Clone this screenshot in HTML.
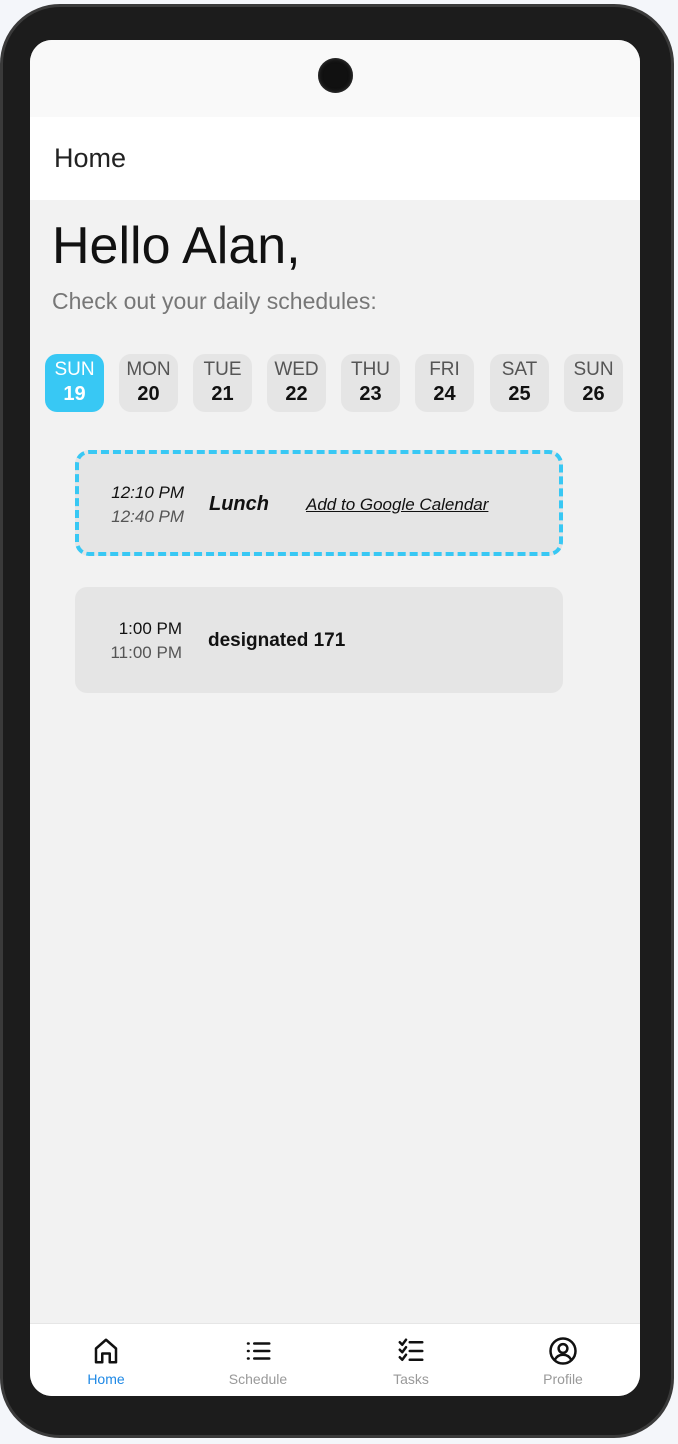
<!DOCTYPE html>
<html><head><meta charset="utf-8"><style>
*{margin:0;padding:0;box-sizing:border-box}
body{width:678px;height:1444px;background:#f4f6fa;position:relative;overflow:hidden;font-family:"Liberation Sans",Roboto,sans-serif}
.phone{position:absolute;left:0;top:4px;width:674px;height:1434px;background:#1c1c1c;border-radius:60px;border:3px solid #3a3a3a}
.screen{position:absolute;left:30px;top:40px;width:610px;height:1356px;background:#f2f2f2;border-radius:22px;overflow:hidden}
.status{height:77px;background:#f9f9f9;position:relative}
.cam{position:absolute;left:288px;top:18px;width:35px;height:35px;border-radius:50%;background:#111;box-shadow:inset 0 0 4px #444}
.header{height:83px;background:#fff;padding-left:24px;font-size:27px;line-height:83px;color:#222}
h1{font-weight:normal;font-size:52px;color:#111;position:absolute;left:22px;top:176px}
.sub{position:absolute;left:22px;top:248px;font-size:23px;color:#777}
.day{position:absolute;top:314px;width:59px;height:58px;border-radius:12px;background:#e5e5e5;text-align:center}
.day .n{font-size:19px;color:#555;margin-top:5px;line-height:22px}
.day .d{font-size:20px;font-weight:bold;color:#111;line-height:26px}
.day.sel{background:#38c8f4}.day.sel .n,.day.sel .d{color:#fff}
.card{position:absolute;background:#e5e5e5;border-radius:12px}
.nav{position:absolute;left:0;top:1283px;width:610px;height:73px;background:#fff;border-top:1px solid #e6e6e6}
.item{position:absolute;top:0;width:152px;text-align:center}
.item svg{display:block;margin:12px auto 0}
.item div{font-size:14px;color:#999;margin-top:5px}
</style></head><body>
<div class="phone"></div>
<div class="screen">
<div class="status"><div class="cam"></div></div>
<div class="header">Home</div>
<h1>Hello Alan,</h1>
<div class="sub">Check out your daily schedules:</div>
<div class="day sel" style="left:15px"><div class="n">SUN</div><div class="d">19</div></div>
<div class="day" style="left:89px"><div class="n">MON</div><div class="d">20</div></div>
<div class="day" style="left:163px"><div class="n">TUE</div><div class="d">21</div></div>
<div class="day" style="left:237px"><div class="n">WED</div><div class="d">22</div></div>
<div class="day" style="left:311px"><div class="n">THU</div><div class="d">23</div></div>
<div class="day" style="left:385px"><div class="n">FRI</div><div class="d">24</div></div>
<div class="day" style="left:460px"><div class="n">SAT</div><div class="d">25</div></div>
<div class="day" style="left:534px"><div class="n">SUN</div><div class="d">26</div></div>
<div class="card" style="left:45px;top:410px;width:488px;height:106px;border:4px dashed #38c8f4;border-radius:14px;background:#e5e5e5"></div>
<div style="position:absolute;left:80px;top:443px;font-size:17px;font-style:italic;color:#111;text-align:right;width:74px">12:10 PM</div>
<div style="position:absolute;left:80px;top:467px;font-size:17px;font-style:italic;color:#555;text-align:right;width:74px">12:40 PM</div>
<div style="position:absolute;left:179px;top:453px;font-size:20px;font-style:italic;font-weight:bold;color:#111">Lunch</div>
<div style="position:absolute;left:276px;top:455px;font-size:17px;font-style:italic;color:#111;text-decoration:underline">Add to Google Calendar</div>
<div class="card" style="left:45px;top:547px;width:488px;height:106px"></div>
<div style="position:absolute;left:72px;top:579px;font-size:17px;color:#111;text-align:right;width:80px">1:00 PM</div>
<div style="position:absolute;left:62px;top:603px;font-size:17px;color:#555;text-align:right;width:90px">11:00 PM</div>
<div style="position:absolute;left:178px;top:590px;font-size:19px;font-weight:bold;color:#111">designated 171</div>
<div class="nav">
<div class="item" style="left:0"><svg width="30" height="30" viewBox="0 0 24 24" fill="none" stroke="#111" stroke-width="2" stroke-linejoin="round"><path d="M4 21V10l8-7 8 7v11h-5v-7H9v7z"/></svg><div style="color:#1e88e5">Home</div></div>
<div class="item" style="left:152px"><svg width="30" height="30" viewBox="0 0 24 24" fill="none" stroke="#111" stroke-width="2" stroke-linecap="round"><path d="M4 6h.5M4 12h.5M4 18h.5M9 6h12M9 12h12M9 18h12"/></svg><div>Schedule</div></div>
<div class="item" style="left:305px"><svg width="30" height="30" viewBox="0 0 24 24" fill="none" stroke="#111" stroke-width="2" stroke-linecap="round" stroke-linejoin="round"><path d="M3 5l2 2 3-4M3 11l2 2 3-4M3 17l2 2 3-4M11 5h10M11 12h10M11 19h10"/></svg><div>Tasks</div></div>
<div class="item" style="left:457px"><svg width="30" height="30" viewBox="0 0 24 24" fill="none" stroke="#111" stroke-width="2"><circle cx="12" cy="12" r="10"/><circle cx="12" cy="10" r="3.5"/><path d="M5.5 19c1.5-3 4-4 6.5-4s5 1 6.5 4"/></svg><div>Profile</div></div>
</div>
</div>
</body></html>
